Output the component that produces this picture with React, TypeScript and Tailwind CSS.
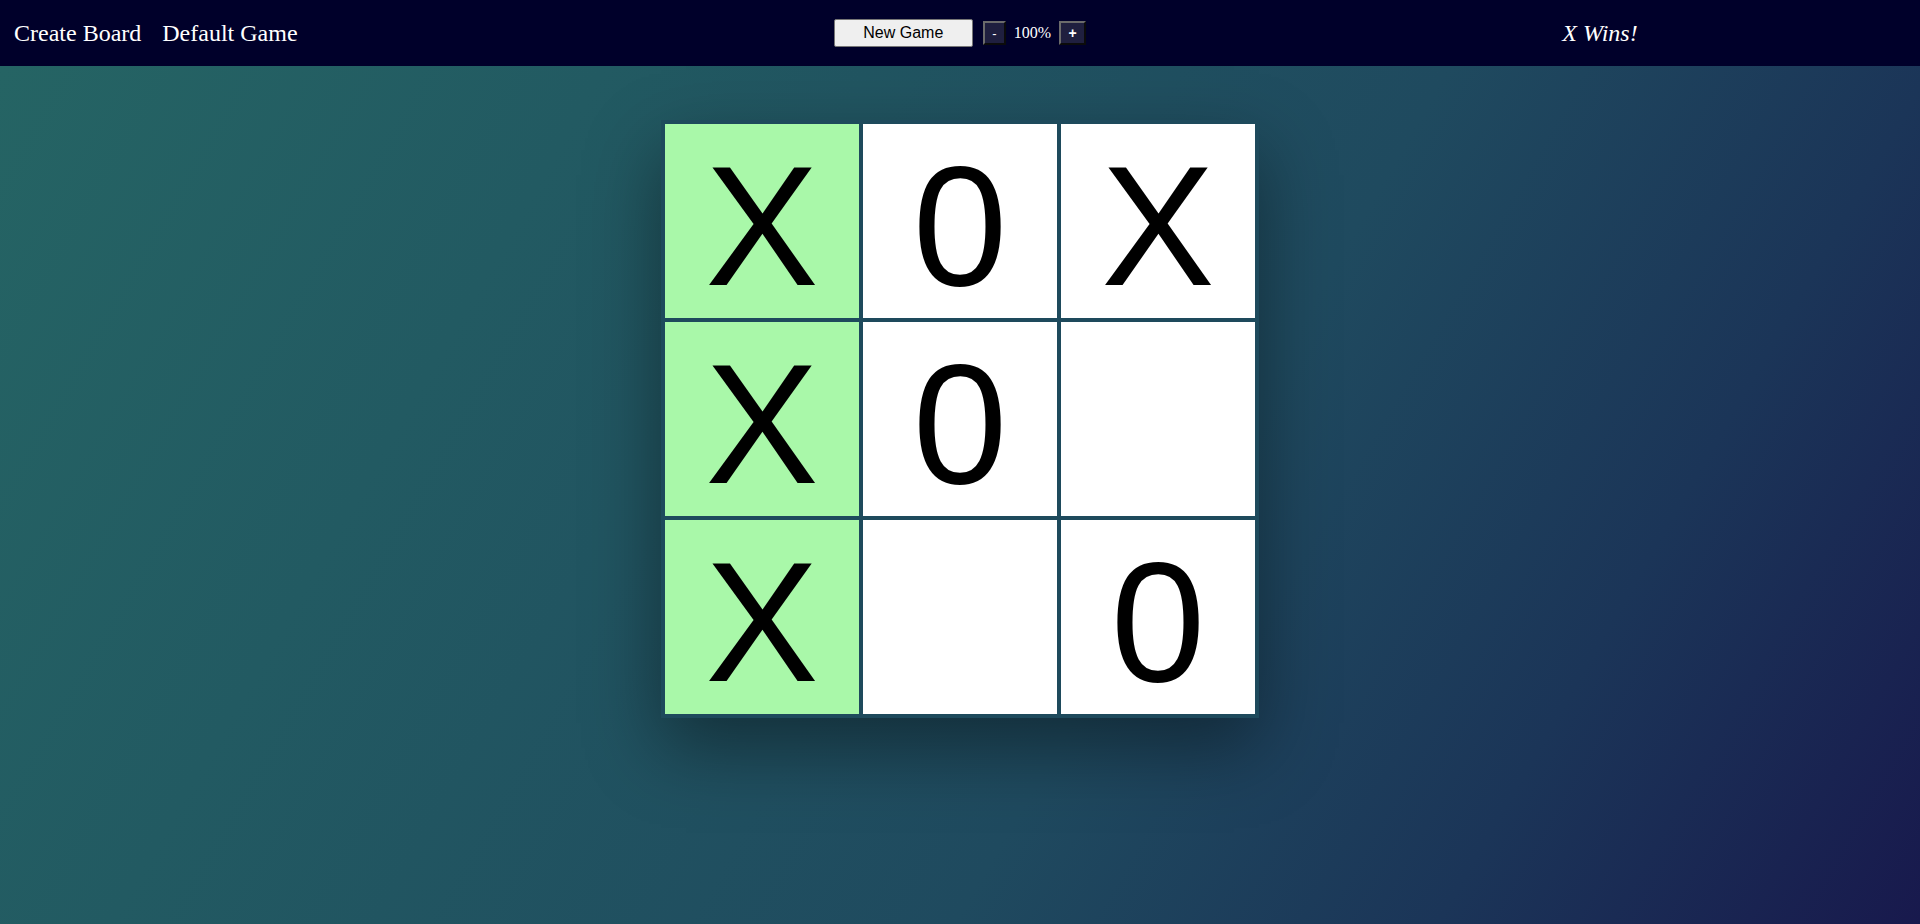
const board: string[] = ["X", "0", "X", "X", "0", "", "X", "", "0"];
const winning = [0, 3, 6];

function Header() {
  return (
    <header className="grid h-[66px] grid-cols-3 items-center bg-[#00002a] text-white">
      <nav className="flex items-center gap-[21px] pl-[14px] font-['Liberation_Serif',serif] text-[24px]">
        <a className="cursor-pointer">Create Board</a>
        <a className="cursor-pointer">Default Game</a>
      </nav>

      <div className="flex items-center justify-center">
        <button className="h-[28px] w-[139px] rounded-[2px] border border-[#767676] bg-[#efefef] font-['Liberation_Sans',Arial,sans-serif] text-[16px] text-black">
          New Game
        </button>
        <button className="ml-[10px] h-[24px] w-[23px] border-2 border-t-[#6b6b6b] border-l-[#6b6b6b] border-r-[#0b0b0b] border-b-[#0b0b0b] bg-[#1f1f3f] font-['Liberation_Sans',Arial,sans-serif] text-[13px] leading-none text-white">
          -
        </button>
        <span className="mx-[8px] font-['Liberation_Serif',serif] text-[16px] text-white">100%</span>
        <button className="h-[24px] w-[27px] border-2 border-t-[#6b6b6b] border-l-[#6b6b6b] border-r-[#0b0b0b] border-b-[#0b0b0b] bg-[#1f1f3f] font-['Liberation_Sans',Arial,sans-serif] text-[14px] font-bold leading-none text-white">
          +
        </button>
      </div>

      <div className="flex justify-center font-['Liberation_Serif',serif] text-[24px] italic">X Wins!</div>
    </header>
  );
}

export default function App() {
  return (
    <div className="flex min-h-screen flex-col">
      <Header />
      <main className="flex-1 bg-[linear-gradient(120deg,#256464_0%,#225a62_25%,#1f4a5f_60%,#1b3558_80%,#18194d_100%)] pt-[54px]">
        {/* board */}
        <div className="mx-auto grid w-fit grid-cols-3 gap-[4px] bg-[#1e4a5c] p-[4px] shadow-[0_30px_70px_rgba(0,0,0,0.4)]">
          {board.map((v, i) => (
            <div
              key={i}
              className={`flex h-[194px] w-[194px] items-center justify-center pt-[10px] font-['Liberation_Sans',Arial,sans-serif] text-[170px] leading-none text-black ${
                winning.includes(i) ? "bg-[#a9f8a9]" : "bg-white"
              }`}
            >
              {v}
            </div>
          ))}
        </div>
      </main>
    </div>
  );
}
